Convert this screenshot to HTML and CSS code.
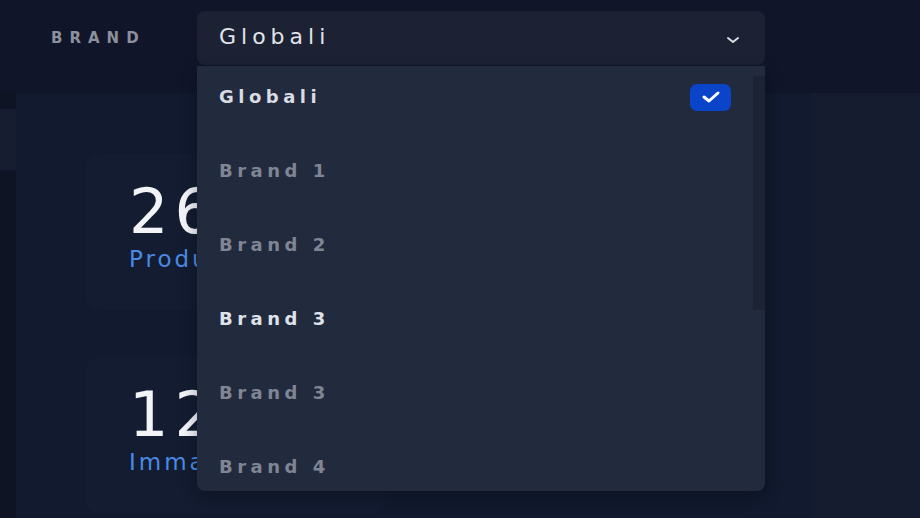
FILE: index.html
```html
<!DOCTYPE html>
<html lang="en">
<head>
  <meta charset="UTF-8">
  <title>Brand filter</title>
  <link rel="stylesheet" href="styles.css">
</head>
<body>

  <header class="topbar">
    <span class="field-label">BRAND</span>
    <div class="select">
      <span class="select-value">Globali</span>
      <svg class="chevron" width="14" height="8" viewBox="0 0 14 8"><path d="M2 2l5 4 5-4" fill="none" stroke="#d9dde4" stroke-width="2" stroke-linecap="round" stroke-linejoin="round"/></svg>
    </div>
  </header>

  <div class="layout">
    <aside class="rail">
      <div class="rail-item"></div>
    </aside>

    <main class="content">
      <div class="card">
        <div class="stat-number">26</div>
        <div class="stat-label">Products</div>
      </div>
      <div class="card">
        <div class="stat-number">12</div>
        <div class="stat-label">Immagini</div>
      </div>
    </main>

    <aside class="side-panel"></aside>
  </div>

  <!-- open dropdown menu -->
  <ul class="menu">
    <li class="option selected">
      <span>Globali</span>
      <span class="check">
        <svg width="20" height="14" viewBox="0 0 20 14"><path d="M3 7l5 4 9-8" fill="none" stroke="#fff" stroke-width="3" stroke-linecap="round" stroke-linejoin="round"/></svg>
      </span>
    </li>
    <li class="option">Brand 1</li>
    <li class="option">Brand 2</li>
    <li class="option bright">Brand 3</li>
    <li class="option">Brand 3</li>
    <li class="option">Brand 4</li>
    <li class="scroll-thumb"></li>
  </ul>

</body>
</html>
```

FILE: styles.css
```css
body {
  margin: 0;
  width: 920px;
  height: 518px;
  overflow: hidden;
  background: #10152a;
  font-family: "DejaVu Sans", "Open Sans", sans-serif;
  position: relative;
}

.topbar {
  height: 93px;
  display: flex;
  align-items: flex-start;
  padding-left: 51px;
  box-sizing: border-box;
  background: #10152a;
}

.field-label {
  width: 146px;
  margin-top: 28px;
  color: #8b909c;
  font-size: 15px;
  font-weight: bold;
  letter-spacing: 7px;
  line-height: 20px;
}

.select {
  margin-top: 11px;
  width: 568px;
  height: 54px;
  background: #1c2233;
  border-radius: 8px;
  display: flex;
  align-items: center;
  justify-content: space-between;
  padding: 0 25px 0 22px;
  box-sizing: border-box;
}

.select-value {
  color: #e1e4ea;
  font-size: 22px;
  letter-spacing: 5px;
  margin-top: -4px;
}

.chevron {
  margin-top: 4px;
}

.layout {
  display: flex;
  height: 425px;
}

.rail {
  width: 16px;
  background: #0e1424;
  padding-top: 16px;
}

.rail-item {
  height: 61px;
  background: #161d31;
}

.content {
  width: 796px;
  background: #111a2e;
  padding: 61px 0 0 69px;
  box-sizing: border-box;
  display: flex;
  flex-direction: column;
  gap: 47px;
}

.card {
  width: 300px;
  height: 156px;
  flex-shrink: 0;
  background: #131c30;
  border-radius: 14px;
  padding: 22px 0 0 44px;
  box-sizing: border-box;
}

.stat-number {
  color: #f2f4f7;
  font-size: 62px;
  line-height: 72px;
  letter-spacing: 6px;
}

.stat-label {
  color: #4a8ae6;
  font-size: 23px;
  line-height: 30px;
  margin-top: -4px;
  letter-spacing: 3px;
}

.side-panel {
  flex: 1;
  background: #151c30;
}

.menu {
  position: absolute;
  left: 197px;
  top: 66px;
  width: 568px;
  height: 425px;
  margin: 0;
  padding: 0;
  list-style: none;
  background: #222a3e;
  border-radius: 0 0 8px 8px;
  overflow: hidden;
  box-shadow: 0 6px 16px rgba(5, 8, 18, 0.35);
}

.option {
  height: 74px;
  padding: 0 34px 14px 22px;
  box-sizing: border-box;
  display: flex;
  align-items: center;
  justify-content: space-between;
  color: #7f8592;
  font-size: 18px;
  font-weight: bold;
  letter-spacing: 4.5px;
}

.option.selected {
  color: #d9dce3;
}

.option.bright {
  color: #dfe2e8;
}

.check {
  width: 41px;
  height: 27px;
  border-radius: 7px;
  background: #0a44c9;
  display: flex;
  align-items: center;
  justify-content: center;
  margin-top: 2px;
}

.scroll-thumb {
  position: absolute;
  right: 0;
  top: 10px;
  width: 12px;
  height: 234px;
  background: #1c2335;
}
```
